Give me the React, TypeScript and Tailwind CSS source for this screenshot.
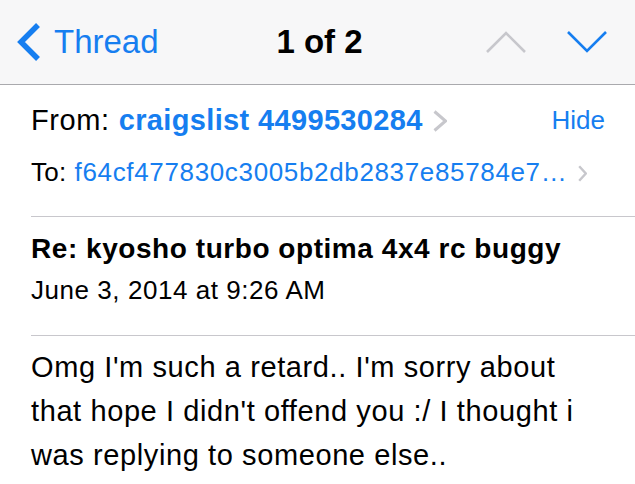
import React from 'react';

const font = { fontFamily: '"Liberation Sans", Arial, sans-serif' };

const BackChevron = () => (
  <svg width="24" height="40" viewBox="0 0 24 40" className="shrink-0">
    <polyline points="21,3 4,20 21,37" fill="none" stroke="#167ef0" strokeWidth="5.5" />
  </svg>
);

const UpDown: React.FC<{ up?: boolean; color: string }> = ({ up, color }) => (
  <svg width="42" height="24" viewBox="0 0 42 24" className="shrink-0">
    {up ? (
      <polyline points="2,22 21,3 40,22" fill="none" stroke={color} strokeWidth="2.6" />
    ) : (
      <polyline points="2,2 21,21 40,2" fill="none" stroke={color} strokeWidth="2.6" />
    )}
  </svg>
);

const Disclosure: React.FC<{ w: number; h: number; sw: number }> = ({ w, h, sw }) => (
  <svg width={w} height={h} viewBox={`0 0 ${w} ${h}`} className="shrink-0">
    <polyline
      points={`${sw / 2},${sw / 2} ${w - sw / 2},${h / 2} ${sw / 2},${h - sw / 2}`}
      fill="none"
      stroke="#c7c7cc"
      strokeWidth={sw}
    />
  </svg>
);

const App: React.FC = () => {
  return (
    <div className="w-[635px] h-[484px] overflow-hidden bg-white text-black" style={font}>
      {/* Navigation bar */}
      <div className="h-[85px] bg-[#f7f7f8] border-b border-[#a9a9ad] flex items-center">
        <div className="flex-1 flex items-center pl-[17px]">
          <BackChevron />
          <span className="ml-[13px] text-[33px] leading-[40px] text-[#167ef0]">Thread</span>
        </div>
        <div className="text-[33px] leading-[40px] font-bold pl-[14px]">1 of 2</div>
        <div className="flex-1 flex items-center justify-end gap-[39px] pr-[27px] pb-[1px]">
          <UpDown up color="#c7c7cc" />
          <UpDown color="#167ef0" />
        </div>
      </div>

      <div className="pl-[31px]">
        {/* Sender block */}
        <div className="border-b border-[#c8c7cc] pt-[17px] pb-[28px]">
          <div className="flex items-center h-[36px] pr-[30px]">
            <span className="text-[29px] leading-[36px] tracking-[0.6px]">From:</span>
            <span className="ml-[9px] text-[29px] leading-[36px] font-bold tracking-[0.35px] text-[#167ef0]">
              craigslist 4499530284
            </span>
            <span className="ml-[10px] mt-[1px]">
              <Disclosure w={14} h={22} sw={3} />
            </span>
            <span className="ml-auto text-[26px] leading-[36px] text-[#167ef0]">Hide</span>
          </div>
          <div className="flex items-center h-[32px] mt-[18px]">
            <span className="text-[26px] leading-[32px] tracking-[0.3px]">To:</span>
            <span className="ml-[8px] text-[26px] leading-[32px] tracking-[0.65px] text-[#167ef0]">
              f64cf477830c3005b2db2837e85784e7…
            </span>
            <span className="ml-[11px] mt-[2px]">
              <Disclosure w={9} h={17} sw={2.4} />
            </span>
          </div>
        </div>

        {/* Subject block */}
        <div className="border-b border-[#c8c7cc] pt-[15px] pb-[29px]">
          <div className="text-[28px] leading-[34px] font-bold tracking-[0.55px]">
            Re: kyosho turbo optima 4x4 rc buggy
          </div>
          <div className="mt-[8px] text-[26px] leading-[32px] tracking-[0.55px]">
            June 3, 2014 at 9:26 AM
          </div>
        </div>

        {/* Message body */}
        <div className="pt-[9px] pr-[40px] text-[29px] leading-[44px] tracking-[0.6px]">
          Omg I'm such a retard.. I'm sorry about that hope I didn't offend you :/ I thought i was
          replying to someone else..
        </div>
      </div>
    </div>
  );
};

export default App;
